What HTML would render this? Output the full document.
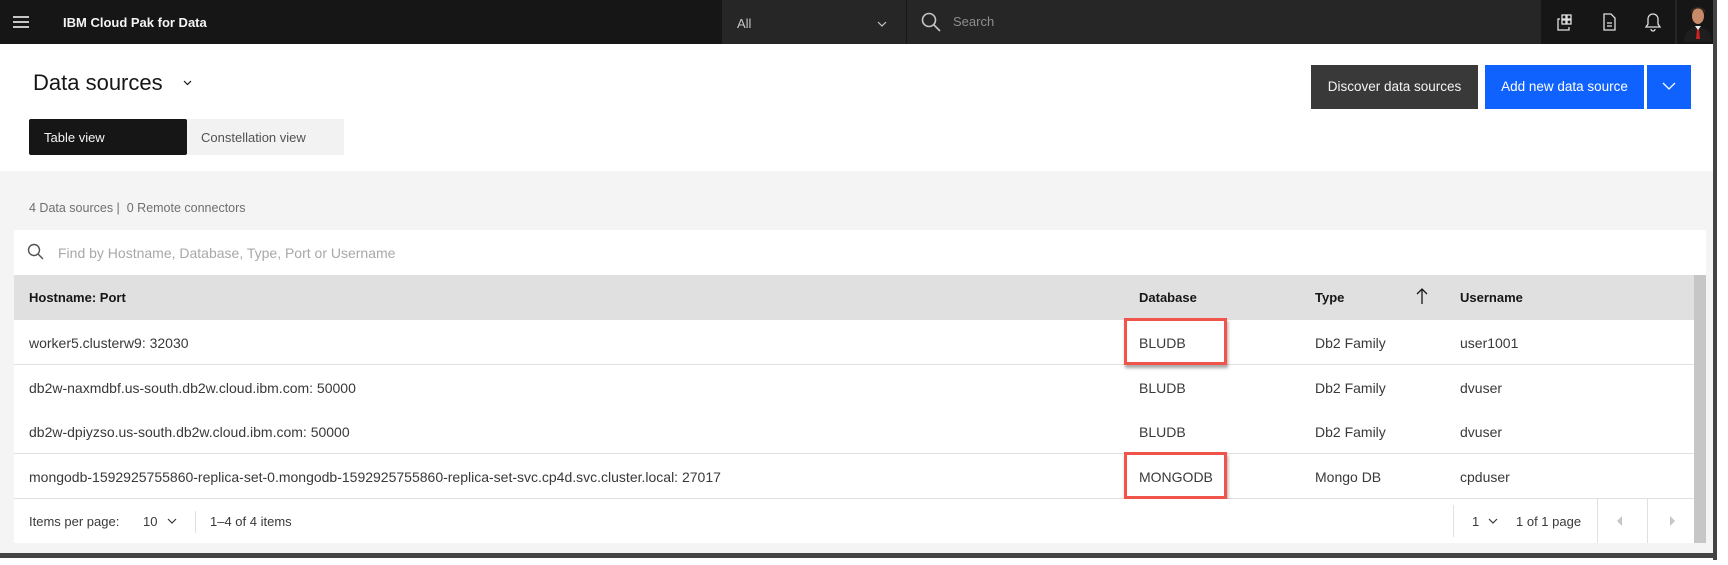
<!DOCTYPE html>
<html><head><meta charset="utf-8"><style>
*{box-sizing:border-box;margin:0;padding:0}
body{width:1728px;height:565px;background:#fff;font-family:"Liberation Sans",sans-serif;position:relative;overflow:hidden;color:#393939}
.a{position:absolute}
.hdr{left:0;top:0;width:1713px;height:44px;background:#161616}
.t{white-space:nowrap;font-size:14px;line-height:1}
.row{left:14px;width:1680px;height:45px;background:#fff;border-bottom:1px solid #e0e0e0}
.red{border:3px solid #f0544a;box-shadow:1px 3px 3px rgba(0,0,0,.35);width:103px;height:47px}
</style></head><body>
<div class="a" style="left:1713px;top:0;width:4px;height:560px;background:#444"></div>
<div class="a" style="left:0;top:553px;width:1717px;height:5px;background:#444"></div>
<div class="a hdr"></div>
<div class="a" style="left:13px;top:16px;width:16px;height:12px;border-top:2px solid #c6c6c6;border-bottom:2px solid #c6c6c6"></div>
<div class="a" style="left:13px;top:21px;width:16px;height:2px;background:#c6c6c6"></div>
<div class="a t" style="left:63px;top:16px;color:#f4f4f4;font-weight:bold;font-size:13px">IBM Cloud Pak for Data</div>
<div class="a" style="left:722px;top:0;width:184px;height:44px;background:#262626"></div>
<div class="a t" style="left:737px;top:17px;color:#c6c6c6;font-size:13px">All</div>
<svg class="a" style="left:877px;top:20px" width="10" height="8"><path d="M1 2l4 4 4-4" stroke="#c6c6c6" stroke-width="1.2" fill="none"/></svg>
<div class="a" style="left:907px;top:0;width:634px;height:44px;background:#262626"></div>
<svg class="a" style="left:921px;top:12px" width="20" height="20"><circle cx="8" cy="8" r="6.5" stroke="#c6c6c6" stroke-width="1.6" fill="none"/><path d="M13 13l6 6" stroke="#c6c6c6" stroke-width="1.6"/></svg>
<div class="a t" style="left:953px;top:15px;color:#8d8d8d;font-size:13px">Search</div>
<svg class="a" style="left:1556px;top:14px" width="18" height="18" fill="none" stroke="#e0e0e0" stroke-width="1.3"><rect x="6" y="1" width="4" height="4"/><rect x="11" y="1" width="4" height="4"/><rect x="6" y="6" width="4" height="4"/><rect x="11" y="6" width="4" height="4"/><path d="M4 5H2v11h11v-3"/></svg>
<svg class="a" style="left:1602px;top:13px" width="16" height="18" fill="none" stroke="#e0e0e0" stroke-width="1.3"><path d="M2 1h7l4 4v12H2z M5 10h5M5 13h5"/></svg>
<svg class="a" style="left:1644px;top:12px" width="18" height="20" fill="none" stroke="#e0e0e0" stroke-width="1.3"><path d="M9 2a5 5 0 0 1 5 5v5l2 3H2l2-3V7a5 5 0 0 1 5-5zM7 17a2 2 0 0 0 4 0"/></svg>
<div class="a" style="left:1675px;top:0;width:2px;height:44px;background:#262626"></div>
<svg class="a" style="left:1682px;top:4px" width="30" height="38"><ellipse cx="16" cy="12" rx="6" ry="8" fill="#c98a6a"/><path d="M9 9q7-9 14 0v-3q-7-6-14 0z" fill="#3a2a20"/><path d="M2 38q1-14 14-16q13 2 14 16z" fill="#1e1e1e"/><path d="M14 22h4l-1 3 1 10h-4l1-10z" fill="#c22"/><path d="M13 22l3 4 3-4" fill="#eee"/></svg>

<div class="a t" style="left:33px;top:72px;font-size:22px;color:#161616">Data sources</div>
<svg class="a" style="left:183px;top:80px" width="9" height="6"><path d="M1 1l3.5 3.5L8 1" stroke="#161616" stroke-width="1.2" fill="none"/></svg>
<div class="a" style="left:29px;top:119px;width:158px;height:36px;background:#161616;border-radius:2px"></div>
<div class="a t" style="left:44px;top:131px;color:#f4f4f4;font-size:13px">Table view</div>
<div class="a" style="left:187px;top:119px;width:157px;height:36px;background:#f2f2f2"></div>
<div class="a t" style="left:201px;top:131px;color:#525252;font-size:13px">Constellation view</div>
<div class="a" style="left:1311px;top:65px;width:167px;height:44px;background:#393939"></div>
<div class="a t" style="left:1311px;top:80px;width:167px;text-align:center;color:#f4f4f4;font-size:13.5px">Discover data sources</div>
<div class="a" style="left:1485px;top:65px;width:159px;height:44px;background:#0f62fe"></div>
<div class="a t" style="left:1485px;top:80px;width:159px;text-align:center;color:#fff;font-size:13.5px">Add new data source</div>
<div class="a" style="left:1647px;top:65px;width:44px;height:44px;background:#0f62fe"></div>
<svg class="a" style="left:1662px;top:81px" width="14" height="10"><path d="M1 2l6 6 6-6" stroke="#fff" stroke-width="1.3" fill="none"/></svg>

<div class="a" style="left:0;top:171px;width:1713px;height:382px;background:#f4f4f4"></div>
<div class="a t" style="left:29px;top:202px;color:#6f6f6f;font-size:12.5px">4 Data sources&nbsp;|&nbsp; 0 Remote connectors</div>
<div class="a" style="left:14px;top:230px;width:1692px;height:45px;background:#fff"></div>
<svg class="a" style="left:27px;top:243px" width="18" height="18"><circle cx="7" cy="7" r="5.5" stroke="#525252" stroke-width="1.4" fill="none"/><path d="M11 11l5 5" stroke="#525252" stroke-width="1.4"/></svg>
<div class="a t" style="left:58px;top:246px;color:#a8a8a8;font-size:14px">Find by Hostname, Database, Type, Port or Username</div>
<div class="a" style="left:14px;top:275px;width:1680px;height:45px;background:#e0e0e0"></div>
<div class="a" style="left:1694px;top:275px;width:12px;height:268px;background:#c6c6c6"></div>
<div class="a t" style="left:29px;top:291px;color:#161616;font-weight:bold;font-size:13px">Hostname: Port</div>
<div class="a t" style="left:1139px;top:291px;color:#161616;font-weight:bold;font-size:13px">Database</div>
<div class="a t" style="left:1315px;top:291px;color:#161616;font-weight:bold;font-size:13px">Type</div>
<svg class="a" style="left:1416px;top:287px" width="12" height="18"><path d="M6 17V2M1 7l5-5 5 5" stroke="#161616" stroke-width="1.3" fill="none"/></svg>
<div class="a t" style="left:1460px;top:291px;color:#161616;font-weight:bold;font-size:13px">Username</div>

<div class="a row" style="top:320px"></div>
<div class="a row" style="top:365px"></div>
<div class="a row" style="top:409px"></div>
<div class="a row" style="top:454px"></div>
<div class="a t" style="left:29px;top:336px">worker5.clusterw9: 32030</div>
<div class="a t" style="left:29px;top:381px">db2w-naxmdbf.us-south.db2w.cloud.ibm.com: 50000</div>
<div class="a t" style="left:29px;top:425px">db2w-dpiyzso.us-south.db2w.cloud.ibm.com: 50000</div>
<div class="a t" style="left:29px;top:470px">mongodb-1592925755860-replica-set-0.mongodb-1592925755860-replica-set-svc.cp4d.svc.cluster.local: 27017</div>
<div class="a t" style="left:1139px;top:336px">BLUDB</div><div class="a t" style="left:1315px;top:336px">Db2 Family</div><div class="a t" style="left:1460px;top:336px">user1001</div>
<div class="a t" style="left:1139px;top:381px">BLUDB</div><div class="a t" style="left:1315px;top:381px">Db2 Family</div><div class="a t" style="left:1460px;top:381px">dvuser</div>
<div class="a t" style="left:1139px;top:425px">BLUDB</div><div class="a t" style="left:1315px;top:425px">Db2 Family</div><div class="a t" style="left:1460px;top:425px">dvuser</div>
<div class="a t" style="left:1139px;top:470px">MONGODB</div><div class="a t" style="left:1315px;top:470px">Mongo DB</div><div class="a t" style="left:1460px;top:470px">cpduser</div>
<div class="a red" style="left:1124px;top:318px"></div>
<div class="a red" style="left:1124px;top:452px"></div>

<div class="a" style="left:14px;top:499px;width:1680px;height:44px;background:#fff"></div>
<div class="a t" style="left:29px;top:515px;font-size:13px">Items per page:</div>
<div class="a t" style="left:143px;top:515px;font-size:13px">10</div>
<svg class="a" style="left:167px;top:517px" width="10" height="8"><path d="M1 2l4 4 4-4" stroke="#393939" stroke-width="1.2" fill="none"/></svg>
<div class="a" style="left:195px;top:511px;width:1px;height:22px;background:#e0e0e0"></div>
<div class="a t" style="left:210px;top:515px;font-size:13px">1–4 of 4 items</div>
<div class="a" style="left:1453px;top:505px;width:1px;height:32px;background:#e0e0e0"></div>
<div class="a t" style="left:1472px;top:515px;font-size:13px">1</div>
<svg class="a" style="left:1488px;top:517px" width="10" height="8"><path d="M1 2l4 4 4-4" stroke="#393939" stroke-width="1.2" fill="none"/></svg>
<div class="a t" style="left:1516px;top:515px;font-size:13px">1 of 1 page</div>
<div class="a" style="left:1597px;top:499px;width:1px;height:44px;background:#e0e0e0"></div>
<svg class="a" style="left:1616px;top:515px" width="8" height="12"><path d="M6 1L1 6l5 5z" fill="#c6c6c6"/></svg>
<div class="a" style="left:1647px;top:499px;width:1px;height:44px;background:#e0e0e0"></div>
<svg class="a" style="left:1668px;top:515px" width="8" height="12"><path d="M2 1l5 5-5 5z" fill="#c6c6c6"/></svg>
</body></html>
